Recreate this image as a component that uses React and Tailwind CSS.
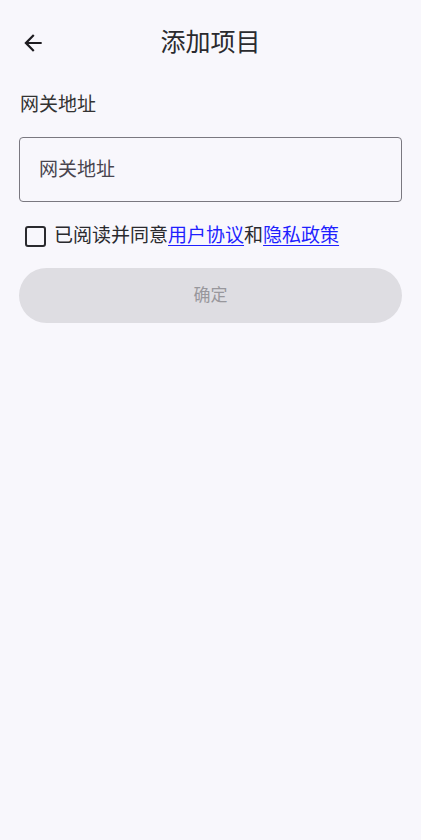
import React, { useState } from "react";

const font = "font-['Roboto','Noto_Sans_CJK_SC',sans-serif]";

export default function App() {
  const [address, setAddress] = useState("");
  const [agreed, setAgreed] = useState(false);

  return (
    <div className={`min-h-screen w-full bg-[#f8f7fc] ${font}`}>
      {/* Top bar */}
      <div className="relative flex h-[86px] items-center justify-center">
        <button className="absolute left-[20px] top-[30px] p-0 text-[#1d1b20]">
          <svg width="26" height="26" viewBox="0 0 24 24" fill="currentColor">
            <path d="M20 11H7.83l5.59-5.59L12 4l-8 8 8 8 1.41-1.41L7.83 13H20v-2z" />
          </svg>
        </button>
        <h1 className="text-[25px] font-normal text-[#2a2a2e]">添加项目</h1>
      </div>

      <div className="px-[19px]">
        {/* Label */}
        <div className="mt-[6px] pl-[1px] text-[19px] leading-[26px] text-[#333]">网关地址</div>

        {/* Input */}
        <input
          type="text"
          placeholder="网关地址"
          value={address}
          onChange={(e) => setAddress(e.target.value)}
          className="mt-[19px] h-[65px] w-full rounded-[4px] border border-[#7a7880] bg-transparent px-[19px] text-[19px] text-[#1d1b20] placeholder:text-[#49454f] focus:outline-none"
        />

        {/* Agreement */}
        <div className="mt-[21px] flex items-center pl-[6px]">
          <button
            onClick={() => setAgreed(!agreed)}
            className={`h-[21px] w-[21px] rounded-[3px] border-2 border-[#2a2a2e] ${
              agreed ? "bg-[#2a2a2e]" : "bg-transparent"
            }`}
          />
          <div className="ml-[8px] text-[19px] leading-[26px] text-[#2a2a2e]">
            已阅读并同意
            <a href="#" className="text-[#1f1fff] underline underline-offset-[3px]">用户协议</a>
            和
            <a href="#" className="text-[#1f1fff] underline underline-offset-[3px]">隐私政策</a>
          </div>
        </div>

        {/* Confirm */}
        <button
          disabled={!agreed || !address}
          className="mt-[19px] flex h-[55px] w-full items-center justify-center rounded-full bg-[#dedde2] text-[17px] text-[#98979c]"
        >
          确定
        </button>
      </div>
    </div>
  );
}
